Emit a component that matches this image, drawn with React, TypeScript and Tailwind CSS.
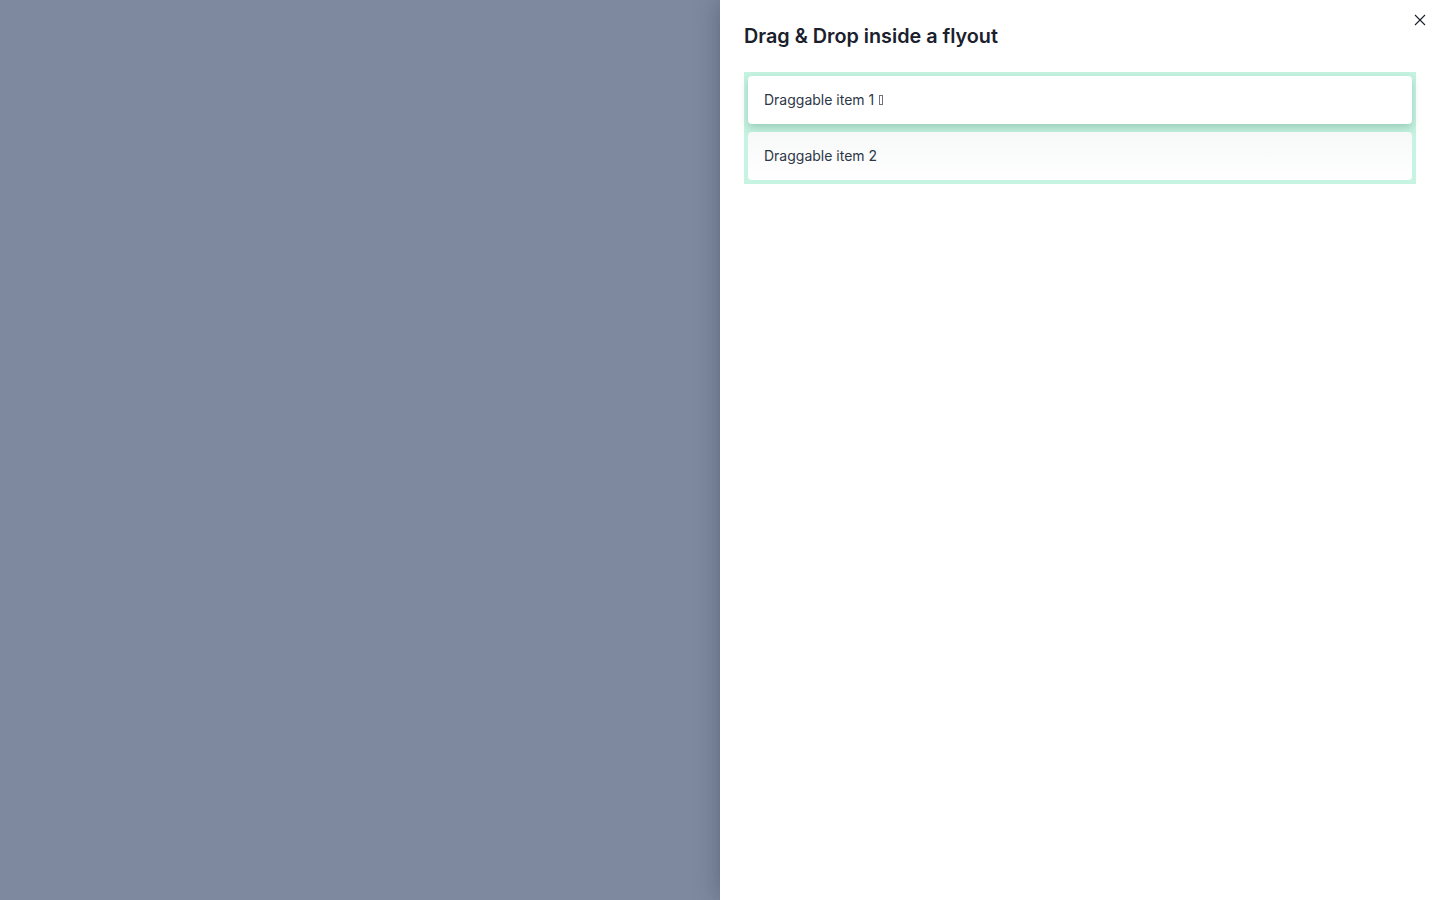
import React from "react";

export default function App() {
  return (
    <div className="flex h-[900px] w-[1440px] overflow-hidden bg-[#7e899f]" style={{ fontFamily: "Inter, 'Noto Sans', sans-serif" }}>
      <div className="flex-1" />
      <div className="relative flex h-full w-[720px] flex-col bg-white px-6 pt-6 shadow-[0_0_24px_rgba(30,40,60,0.35)]">
        <button className="absolute right-[14px] top-[14px] flex h-3 w-3 items-center justify-center text-[#1a202c]">
          <svg width="12" height="12" viewBox="0 0 12 12" fill="none" stroke="currentColor" strokeWidth="1.1">
            <path d="M1 1 L11 11 M11 1 L1 11" />
          </svg>
        </button>
        <h2 className="text-[19.8px] font-semibold leading-6 text-[#1a202c]">Drag &amp; Drop inside a flyout</h2>
        <div className="mt-6 flex flex-col gap-2 bg-[#c6f3e2] p-1">
          <div className="flex h-12 items-center rounded bg-white px-4 text-[14px] leading-5 text-[#2d3748] shadow-[0_4px_8px_rgba(60,120,100,0.3)]">
            <span>Draggable item 1</span>
            <span className="ml-[5px] inline-block h-[10px] w-[4px] border border-[#6b7280]" />
          </div>
          <div className="flex h-12 items-center rounded bg-gradient-to-b from-[#f7f8f8] to-white px-4 text-[14px] leading-5 text-[#2d3748]">
            Draggable item 2
          </div>
        </div>
      </div>
    </div>
  );
}
